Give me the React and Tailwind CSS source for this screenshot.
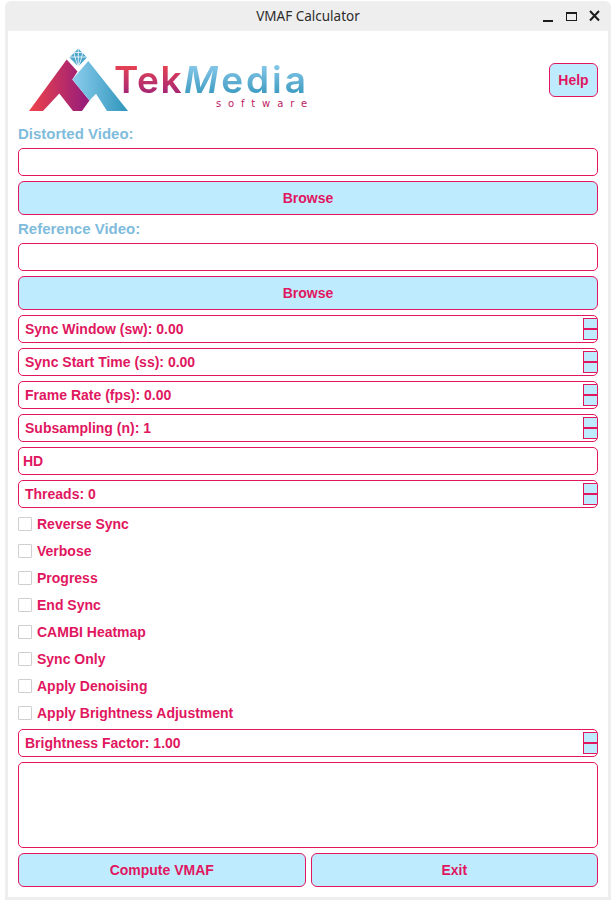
import { useState } from "react";

const boxClass = "h-[28px] w-full rounded-[5px] border border-[#e0175f] bg-white";
const buttonClass =
  "h-[34px] rounded-[6px] border border-[#e0175f] bg-[#bfebff] text-[14px] font-bold text-[#e0175f]";

function Logo() {
  return (
    <div className="flex h-[80px] items-center pl-[11px]">
      <svg width="100" height="64" viewBox="29 48.5 100 64" className="shrink-0">
        <defs>
          <linearGradient id="redMark" x1="0" y1="0" x2="1" y2="0">
            <stop offset="0" stopColor="#ef4349" />
            <stop offset="0.9" stopColor="#9b1f78" />
          </linearGradient>
          <linearGradient id="blueMark" x1="0" y1="0" x2="1" y2="0">
            <stop offset="0" stopColor="#8ccdee" />
            <stop offset="1" stopColor="#2f95bb" />
          </linearGradient>
        </defs>
        <polygon
          points="29,111.5 66.7,60 77.5,72 72.3,80 89.5,101 82,111.5 73,111.5 59.3,94 43,111.5"
          fill="url(#redMark)"
        />
        <polygon
          points="88.3,61.5 72.3,80 89.5,101 96,94.3 107,111.5 128,111.5"
          fill="url(#blueMark)"
        />
        <polygon points="78.3,49 87,58 78.3,67 69.5,58" fill="#4ba6cc" />
        <path
          d="M69.5 57.5H87M78.3 49V67M74 53.5C75 58 76 62 78.3 67M82.6 53.5C81.6 58 80.6 62 78.3 67M74.5 53H82"
          stroke="#fff"
          strokeWidth="0.8"
          fill="none"
        />
      </svg>
      <div className="-ml-[15px] flex flex-col items-end self-start pt-[22px] font-['Inter',sans-serif] font-semibold">
        <div className="flex h-[36px] items-center text-[37px] leading-[36px]">
          <span className="bg-gradient-to-b from-[#ef4349] to-[#9b1f78] bg-clip-text pr-[1px] tracking-[1.5px] text-transparent">
            Tek
          </span>
          <span className="bg-gradient-to-b from-[#8ccdee] to-[#2f95bb] bg-clip-text tracking-[3px] text-transparent">
            <span className="italic">M</span>edia
          </span>
        </div>
        <span className="mr-[-5px] font-['DejaVu_Sans',sans-serif] text-[10px] font-normal leading-[12px] tracking-[6.9px] text-[#bd2063]">
          software
        </span>
      </div>
    </div>
  );
}

function SpinBox({ label }) {
  return (
    <div className={`${boxClass} flex items-center justify-between pl-[6px]`}>
      <span>{label}</span>
      <div className="flex h-[22px] w-[14px] flex-col border border-r-0 border-[#e0175f] bg-[#bfebff]">
        <div className="h-[9px] border-b-2 border-[#e0175f] box-content" />
      </div>
    </div>
  );
}

function Check({ label }) {
  const [checked, setChecked] = useState(false);
  return (
    <label className="flex h-[22px] items-center gap-[5px]">
      <input
        type="checkbox"
        checked={checked}
        onChange={(e) => setChecked(e.target.checked)}
        className="h-[14px] w-[14px] appearance-none rounded-[1px] border border-[#cfcfcf] bg-white checked:bg-[#bfebff]"
      />
      <span>{label}</span>
    </label>
  );
}

export default function App() {
  return (
    <div className="h-[907px] w-[615px] bg-white pl-[5px] pt-[1px] font-['Liberation_Sans',Arial,sans-serif] text-[14px] font-bold text-[#e0175f]">
      <div className="flex h-[899px] w-[606px] flex-col rounded-t-[6px] bg-[#eeeeee]">
        <div className="relative flex h-[30px] shrink-0 items-center justify-center font-['Noto_Sans',sans-serif] text-[13.5px] font-normal text-[#2c2c2c]">
          VMAF Calculator
          <div className="absolute right-[11px] top-[9px] flex items-start gap-[12px]">
            <svg width="11" height="12" viewBox="0 0 11 12">
              <rect x="0" y="10" width="10" height="2" fill="#1c1c1c" />
            </svg>
            <svg width="11" height="12" viewBox="0 0 11 12">
              <rect x="0.5" y="2.5" width="10" height="8" fill="none" stroke="#1c1c1c" />
              <rect x="0" y="2" width="11" height="2" fill="#1c1c1c" />
            </svg>
            <svg width="11" height="12" viewBox="0 0 11 12">
              <path d="M1 1L10 10.5M10 1L1 10.5" stroke="#1c1c1c" strokeWidth="2" fill="none" />
            </svg>
          </div>
        </div>
        <div className="mx-[3px] mb-[3px] flex flex-1 flex-col gap-[5px] bg-white px-[10px] pt-[9px]">
          <div className="flex h-[80px] items-center justify-between">
            <Logo />
            <button className="h-[34px] w-[49px] rounded-[6px] border border-[#e0175f] bg-[#bfebff] text-[14px] font-bold text-[#e0175f]">
              Help
            </button>
          </div>
          <div className="h-[18px] text-[15px] leading-[18px] text-[#7fbcdc]">Distorted Video:</div>
          <input className={`${boxClass} px-1 outline-none`} />
          <button className={buttonClass}>Browse</button>
          <div className="h-[18px] text-[15px] leading-[18px] text-[#7fbcdc]">Reference Video:</div>
          <input className={`${boxClass} px-1 outline-none`} />
          <button className={buttonClass}>Browse</button>
          <SpinBox label="Sync Window (sw): 0.00" />
          <SpinBox label="Sync Start Time (ss): 0.00" />
          <SpinBox label="Frame Rate (fps): 0.00" />
          <SpinBox label="Subsampling (n): 1" />
          <div className={`${boxClass} flex items-center pl-1`}>HD</div>
          <SpinBox label="Threads: 0" />
          <Check label="Reverse Sync" />
          <Check label="Verbose" />
          <Check label="Progress" />
          <Check label="End Sync" />
          <Check label="CAMBI Heatmap" />
          <Check label="Sync Only" />
          <Check label="Apply Denoising" />
          <Check label="Apply Brightness Adjustment" />
          <SpinBox label="Brightness Factor: 1.00" />
          <textarea className="h-[86px] w-full resize-none rounded-[5px] border border-[#e0175f] bg-white outline-none" />
          <div className="grid grid-cols-2 gap-[5px]">
            <button className={buttonClass}>Compute VMAF</button>
            <button className={buttonClass}>Exit</button>
          </div>
        </div>
      </div>
    </div>
  );
}
